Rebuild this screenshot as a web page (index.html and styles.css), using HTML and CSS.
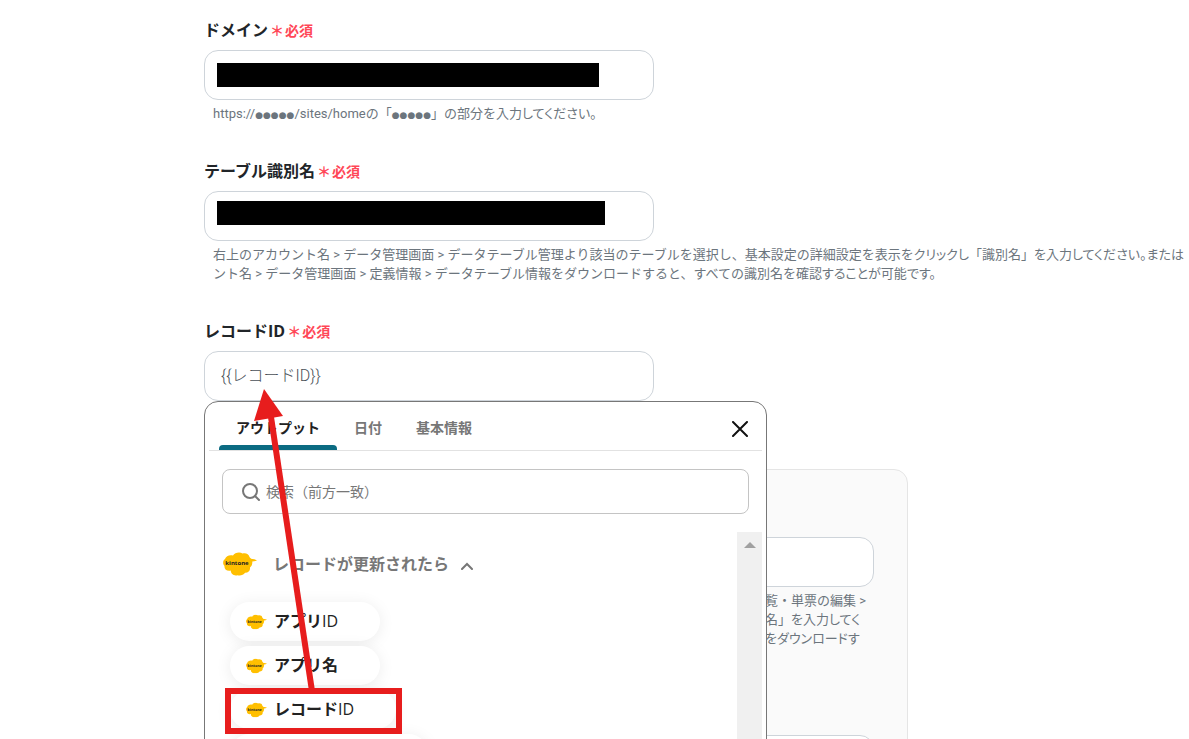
FILE: index.html
```html
<!DOCTYPE html>
<html lang="ja">
<head>
<meta charset="utf-8">
<title>レコードID</title>
<link rel="stylesheet" href="styles.css">
</head>
<body>
<svg class="defs" aria-hidden="true">
  <symbol id="kintone" viewBox="0 0 34 24">
    <path fill="#ffbf00" d="M10 3.5C11.500 .5 17 -.5 19.500 1.500C22 .5 26 1.500 26.500 5C27.500 6.500 28.500 7 29.500 7C31 7 32.500 7.500 34 8.200C32.500 9 31 9.500 29.300 9.600C29.500 12.500 28.500 14.500 27 15.500C27.500 19 25 21 22 20.800C20.500 23.500 16.500 24 14.500 23.200C11.500 24.500 7.500 22 7.800 18.500C4 19.500 1 17 1.500 14C-.5 12 -.3 8.500 2 7C3 4 6.500 2.500 10 3.500Z"/>
    <text class="logo-text" x="14" y="13" text-anchor="middle">kintone</text>
  </symbol>
</svg>
<form class="form">
  <div class="field">
    <label class="label" for="domain">ドメイン<span class="required"><span class="star">＊</span>必須</span></label>
    <div class="control">
      <input class="input" id="domain" type="text">
      <span class="mask"></span>
    </div>
    <p class="help">https://<span class="dots">●●●●●</span>/sites/homeの「<span class="dots">●●●●●</span>」の部分を<span class="tight">入力してください。</span></p>
  </div>
  <div class="field">
    <label class="label" for="table">テーブル識別名<span class="required"><span class="star">＊</span>必須</span></label>
    <div class="control">
      <input class="input" id="table" type="text">
      <span class="mask mask-long"></span>
    </div>
    <p class="help">右上のアカウント名 &gt; データ管理画面 &gt; データテーブル管理より該当のテーブルを選択し、基本設定の詳細設定を表示を<span class="tight">クリックし</span>「識別名」<span class="tight">を入力してください。または</span><br>ント名 &gt; データ管理画面 &gt; 定義情報 &gt; データテーブル情報をダウンロードすると、すべての識別名を<span class="tight">確認することが可能です。</span></p>
  </div>
  <div class="field">
    <label class="label" for="record">レコードID<span class="required"><span class="star">＊</span>必須</span></label>
    <div class="control">
      <input class="input" id="record" type="text" value="{{レコードID}}">
      <div class="picker">
        <div class="tabs">
          <button class="tab active" type="button">アウトプット</button>
          <button class="tab" type="button">日付</button>
          <button class="tab" type="button">基本情報</button>
          <button class="close" type="button" aria-label="閉じる">
            <svg width="16" height="16" viewBox="0 0 16 16"><path d="M1 1L15 15M15 1L1 15" stroke="#111" stroke-width="2" stroke-linecap="round"/></svg>
          </button>
        </div>
        <div class="search">
          <svg width="20" height="20" viewBox="0 0 20 20" fill="none" stroke="#777" stroke-width="2"><circle cx="9" cy="9" r="7"/><path d="M14 14L18 18" stroke-linecap="round"/></svg>
          <input class="search-input" type="search" placeholder="検索（前方一致）" aria-label="検索">
        </div>
        <div class="results">
          <div class="list">
            <button class="group" type="button">
              <svg class="logo" viewBox="0 0 34 24"><use href="#kintone"/></svg>
              <span class="group-name">レコードが更新されたら</span>
              <svg class="chevron" width="12" height="8" viewBox="0 0 12 8" fill="none" stroke="#777" stroke-width="2"><path d="M1 7L6 2L11 7" stroke-linecap="round"/></svg>
            </button>
            <div class="chips">
              <button class="chip" type="button"><svg class="logo-small" viewBox="0 0 34 24"><use href="#kintone"/></svg><span class="chip-name">アプリ<span class="latin">ID</span></span></button>
              <button class="chip" type="button"><svg class="logo-small" viewBox="0 0 34 24"><use href="#kintone"/></svg><span class="chip-name">アプリ名</span></button>
              <button class="chip chip-wide" type="button"><svg class="logo-small" viewBox="0 0 34 24"><use href="#kintone"/></svg><span class="chip-name">レコード<span class="latin">ID</span></span></button>
              <button class="chip chip-wider" type="button" aria-label="アウトプット"></button>
            </div>
          </div>
          <div class="scrollbar"><svg width="12" height="6" viewBox="0 0 12 6"><path d="M0 6L6 0L12 6Z" fill="#a0a0a0"/></svg></div>
        </div>
      </div>
      <svg class="callout" width="210" height="390" viewBox="0 0 210 390">
        <path d="M108 340L67 66" stroke="#e71d1d" stroke-width="6"/>
        <path d="M60 38L50 70L79 65Z" fill="#e71d1d"/>
        <rect x="24" y="340" width="171" height="40" fill="none" stroke="#e71d1d" stroke-width="6"/>
      </svg>
    </div>
  </div>
  <section class="panel">
    <div class="control-wide"><input class="input" type="text" aria-label="識別名"></div>
    <p class="help panel-help">覧・単票の編集 &gt;<br>名」<span class="tight">を入力してく<br>をダウンロードす</span></p>
    <div class="control-wide control-next"><input class="input" type="text" aria-label="テーブル識別名"></div>
  </section>
</form>
</body>
</html>
```
FILE: styles.css
```css
* { box-sizing: border-box; }

body {
  margin: 0;
  height: 100vh;
  overflow: hidden;
  background: #fff;
  color: #212529;
  font-family: "Open Sans", "Noto Sans CJK JP", sans-serif;
  font-size: 16px;
}

button, input { font-family: inherit; }
button { border: 0; padding: 0; background: none; }
.defs { display: none; }
.logo-text { font: 700 6px "Open Sans", sans-serif; fill: #222; }

.form { padding: 18px 0 0 204px; }
.field { margin-bottom: 36px; }

.label {
  display: flex;
  align-items: center;
  height: 21px;
  margin-bottom: 11px;
  font-weight: 700;
}

.required { padding-top: 2px; color: #ff4757; font-size: 14px; }
.star { margin: 0 1px 0 2px; }

.control { position: relative; max-width: 450px; }

.input {
  display: block;
  width: 100%;
  height: 50px;
  padding: 0 16px 4px;
  border: 1px solid #ced4da;
  border-radius: 14px;
  background: #fff;
  color: #495057;
  font-family: Roboto, "Noto Sans CJK JP", sans-serif;
  font-size: 16px;
}
#record { font-weight: 300; }

.mask {
  position: absolute;
  top: 13px;
  left: 13px;
  width: 382px;
  height: 24px;
  background: #000;
}
.mask-long { top: 10px; width: 388px; }

.help {
  margin: 4px 0 0;
  padding-left: 9px;
  color: #6c757d;
  font-family: Roboto, "Noto Sans CJK JP", sans-serif;
  font-size: 13px;
  line-height: 19px;
  white-space: nowrap;
}
.dots { font-family: "DejaVu Sans", sans-serif; font-size: 9px; line-height: 1; }
.tight { font-feature-settings: "palt"; }

.picker {
  position: absolute;
  z-index: 2;
  top: 100%;
  left: 0;
  width: 563px;
  border: 1px solid #777;
  border-radius: 14px 14px 0 0;
  background: #fff;
}

.tabs {
  display: flex;
  height: 49px;
  margin: 0 4px;
  padding: 0 14px 0 10px;
  border-bottom: 1px solid #e2e2e2;
}

.tab {
  position: relative;
  padding: 1px 17px 0;
  color: #777;
  font-size: 14px;
  font-weight: 700;
  line-height: 50px;
}
.tab.active { color: #222; }
.tab.active::after {
  content: "";
  position: absolute;
  right: 0;
  bottom: 0;
  left: 0;
  height: 5px;
  border-radius: 4px 4px 0 0;
  background: #0b6b82;
}

.close { margin-left: auto; padding-top: 6px; }
.close svg, .group svg { display: block; }

.search {
  display: flex;
  align-items: center;
  gap: 5px;
  height: 45px;
  margin: 18px 17px;
  padding: 0 18px;
  border: 1px solid #c4c4c4;
  border-radius: 8px;
}
.search-input {
  flex: 1;
  border: 0;
  padding: 0;
  background: none;
  font-size: 14px;
}
.search-input::placeholder { color: #777; }

.results { display: flex; margin: 0 4px 0 17px; }
.list { flex: 1; padding-top: 20px; }

.group {
  display: flex;
  align-items: center;
  height: 24px;
  padding-left: 1px;
  color: #777;
  font-size: 16px;
  font-weight: 700;
}
.logo { width: 34px; height: 24px; }
.group-name, .chip-name { padding-bottom: 3px; }
.group-name { margin: 0 12px 0 16px; }
.chevron { margin-top: 4px; }

.chips {
  display: flex;
  flex-direction: column;
  align-items: flex-start;
  gap: 5px;
  padding: 26px 8px 0;
}
.chip {
  display: flex;
  align-items: center;
  gap: 7px;
  min-width: 150px;
  height: 39px;
  padding: 0 16px;
  border-radius: 20px;
  background: #fff;
  box-shadow: 0 2px 16px rgba(0, 0, 0, 0.08);
  color: #222;
  font-size: 16px;
  font-weight: 700;
}
.chip-wide { min-width: 166px; }
.chip-wider { min-width: 198px; }
.logo-small { width: 21px; height: 16px; }
.latin { font-weight: 500; }

.scrollbar {
  width: 25px;
  padding-top: 10px;
  background: #f0f0f0;
  line-height: 0;
  text-align: center;
}
.scrollbar svg { display: inline-block; }

.callout {
  position: absolute;
  z-index: 3;
  top: 0;
  left: 0;
  pointer-events: none;
}

.panel {
  max-width: 704px;
  margin-top: 68px;
  padding: 67px 33px 40px;
  border: 1px solid #e5e5e5;
  border-radius: 14px;
  background: #fafafa;
}
.panel-help { padding-left: 527px; }
.control-next { margin-top: 87px; }
```
